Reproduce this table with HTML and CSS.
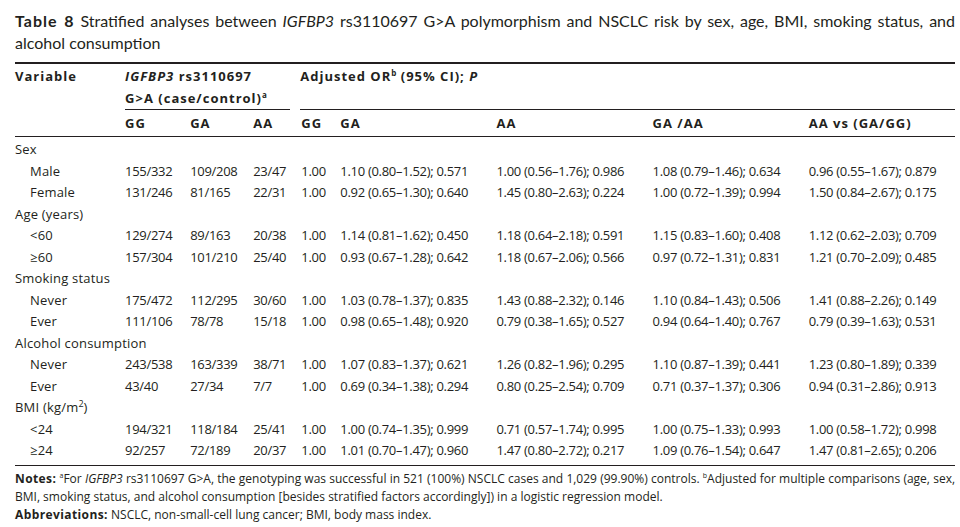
FILE: index.html
```html
<!DOCTYPE html>
<html>
<head>
<meta charset="utf-8">
<link rel="stylesheet" href="styles.css">
</head>
<body>
<div class="page">
  <p class="caption"><b class="cap-lbl">Table 8</b> Stratified analyses between <i>IGFBP3</i> rs3110697 G&gt;A polymorphism and NSCLC risk by sex, age, BMI, smoking status, and alcohol consumption</p>
  <table class="tbl">
    <colgroup>
      <col class="c-var"><col class="c-gg1"><col class="c-ga1"><col class="c-aa1"><col class="c-gg2"><col class="c-wide"><col class="c-wide"><col class="c-wide"><col class="c-last">
    </colgroup>
    <thead>
      <tr class="hrow1">
        <th rowspan="2" class="var-h">Variable</th>
        <th colspan="3"><div class="grp grp-left"><i>IGFBP3</i> rs3110697<br>G&gt;A (case/control)<sup>a</sup></div></th>
        <th colspan="5"><div class="grp grp-right">Adjusted OR<sup>b</sup> (95% CI); <i>P</i><br>&nbsp;</div></th>
      </tr>
      <tr class="hrow2">
        <th>GG</th><th>GA</th><th>AA</th><th>GG</th><th>GA</th><th>AA</th><th>GA /AA</th><th>AA vs (GA/GG)</th>
      </tr>
    </thead>
    <tbody>
      <tr class="first"><td colspan="9">Sex</td></tr>
      <tr><td class="sub">Male</td><td>155/332</td><td>109/208</td><td>23/47</td><td>1.00</td><td>1.10 (0.80–1.52); 0.571</td><td>1.00 (0.56–1.76); 0.986</td><td>1.08 (0.79–1.46); 0.634</td><td>0.96 (0.55–1.67); 0.879</td></tr>
      <tr><td class="sub">Female</td><td>131/246</td><td>81/165</td><td>22/31</td><td>1.00</td><td>0.92 (0.65–1.30); 0.640</td><td>1.45 (0.80–2.63); 0.224</td><td>1.00 (0.72–1.39); 0.994</td><td>1.50 (0.84–2.67); 0.175</td></tr>
      <tr><td colspan="9">Age (years)</td></tr>
      <tr><td class="sub">&lt;60</td><td>129/274</td><td>89/163</td><td>20/38</td><td>1.00</td><td>1.14 (0.81–1.62); 0.450</td><td>1.18 (0.64–2.18); 0.591</td><td>1.15 (0.83–1.60); 0.408</td><td>1.12 (0.62–2.03); 0.709</td></tr>
      <tr><td class="sub">≥60</td><td>157/304</td><td>101/210</td><td>25/40</td><td>1.00</td><td>0.93 (0.67–1.28); 0.642</td><td>1.18 (0.67–2.06); 0.566</td><td>0.97 (0.72–1.31); 0.831</td><td>1.21 (0.70–2.09); 0.485</td></tr>
      <tr><td colspan="9">Smoking status</td></tr>
      <tr><td class="sub">Never</td><td>175/472</td><td>112/295</td><td>30/60</td><td>1.00</td><td>1.03 (0.78–1.37); 0.835</td><td>1.43 (0.88–2.32); 0.146</td><td>1.10 (0.84–1.43); 0.506</td><td>1.41 (0.88–2.26); 0.149</td></tr>
      <tr><td class="sub">Ever</td><td>111/106</td><td>78/78</td><td>15/18</td><td>1.00</td><td>0.98 (0.65–1.48); 0.920</td><td>0.79 (0.38–1.65); 0.527</td><td>0.94 (0.64–1.40); 0.767</td><td>0.79 (0.39–1.63); 0.531</td></tr>
      <tr><td colspan="9">Alcohol consumption</td></tr>
      <tr><td class="sub">Never</td><td>243/538</td><td>163/339</td><td>38/71</td><td>1.00</td><td>1.07 (0.83–1.37); 0.621</td><td>1.26 (0.82–1.96); 0.295</td><td>1.10 (0.87–1.39); 0.441</td><td>1.23 (0.80–1.89); 0.339</td></tr>
      <tr><td class="sub">Ever</td><td>43/40</td><td>27/34</td><td>7/7</td><td>1.00</td><td>0.69 (0.34–1.38); 0.294</td><td>0.80 (0.25–2.54); 0.709</td><td>0.71 (0.37–1.37); 0.306</td><td>0.94 (0.31–2.86); 0.913</td></tr>
      <tr><td colspan="9">BMI (kg/m<sup class="sq">2</sup>)</td></tr>
      <tr><td class="sub">&lt;24</td><td>194/321</td><td>118/184</td><td>25/41</td><td>1.00</td><td>1.00 (0.74–1.35); 0.999</td><td>0.71 (0.57–1.74); 0.995</td><td>1.00 (0.75–1.33); 0.993</td><td>1.00 (0.58–1.72); 0.998</td></tr>
      <tr class="last"><td class="sub">≥24</td><td>92/257</td><td>72/189</td><td>20/37</td><td>1.00</td><td>1.01 (0.70–1.47); 0.960</td><td>1.47 (0.80–2.72); 0.217</td><td>1.09 (0.76–1.54); 0.647</td><td>1.47 (0.81–2.65); 0.206</td></tr>
    </tbody>
  </table>
  <div class="notes">
    <p class="note"><b class="lbl">Notes:</b> <sup class="ns">a</sup>For <i>IGFBP3</i> rs3110697 G&gt;A, the genotyping was successful in 521 (100%) NSCLC cases and 1,029 (99.90%) controls. <sup class="ns">b</sup>Adjusted for multiple comparisons (age, sex, BMI, smoking status, and alcohol consumption [besides stratified factors accordingly]) in a logistic regression model.</p>
    <p class="note"><b class="lbl">Abbreviations:</b> NSCLC, non-small-cell lung cancer; BMI, body mass index.</p>
  </div>
</div>
</body>
</html>
```
FILE: styles.css
```css
html, body {
  margin: 0;
  padding: 0;
  background: #ffffff;
}
body {
  font-family: "Open Sans", Lato, "Liberation Sans", sans-serif;
  color: #231f20;
}
.page {
  width: 940px;
  padding: 10px 15px 0 15px;
}
.caption {
  margin: 0 0 8px 0;
  font-family: Lato, "Open Sans", sans-serif;
  font-size: 16px;
  line-height: 22px;
  text-align: justify;
}
.cap-lbl {
  font-weight: 700;
  letter-spacing: 1px;
}
.tbl {
  width: 940px;
  border-collapse: collapse;
  table-layout: fixed;
  font-size: 13px;
  border-top: 2px solid #231f20;
  border-bottom: 1px solid #231f20;
}
.c-var { width: 110px; }
.c-gg1 { width: 65px; }
.c-ga1 { width: 63px; }
.c-aa1 { width: 48px; }
.c-gg2 { width: 39px; }
.c-wide { width: 156px; }
.c-last { width: 146px; }
.tbl th, .tbl td {
  padding: 0;
  text-align: left;
  white-space: nowrap;
  vertical-align: top;
}
.tbl th {
  font-weight: 700;
  line-height: 22px;
  letter-spacing: 1px;
}
.hrow1 th {
  padding-top: 1px;
}
.var-h {
  border-bottom: 1px solid #231f20;
}
.grp {
  border-bottom: 1px solid #231f20;
}
.grp-left {
  margin-right: 11px;
}
.grp-right {
  margin-left: -1px;
}
.hrow2 th {
  line-height: 26px;
  border-bottom: 1px solid #231f20;
}
.tbl sup {
  font-size: 8px;
  line-height: 0;
  letter-spacing: 0;
  vertical-align: baseline;
  position: relative;
  top: -5px;
}
.tbl td {
  line-height: 21.5px;
  letter-spacing: -0.3px;
}
.tbl td:first-child {
  letter-spacing: 0.2px;
}
.tbl tr.first td {
  padding-top: 2px;
}
.tbl tr.last td {
  padding-bottom: 3px;
}
.tbl td.sub {
  padding-left: 15px;
}
.tbl sup.sq {
  font-size: 9px;
}
.notes {
  padding-top: 4px;
}
.note {
  margin: 0;
  font-size: 12px;
  line-height: 18px;
  text-align: justify;
}
.lbl {
  font-weight: 700;
  letter-spacing: 0.4px;
}
.ns {
  font-size: 7px;
  line-height: 0;
  vertical-align: baseline;
  position: relative;
  top: -5px;
}
```
